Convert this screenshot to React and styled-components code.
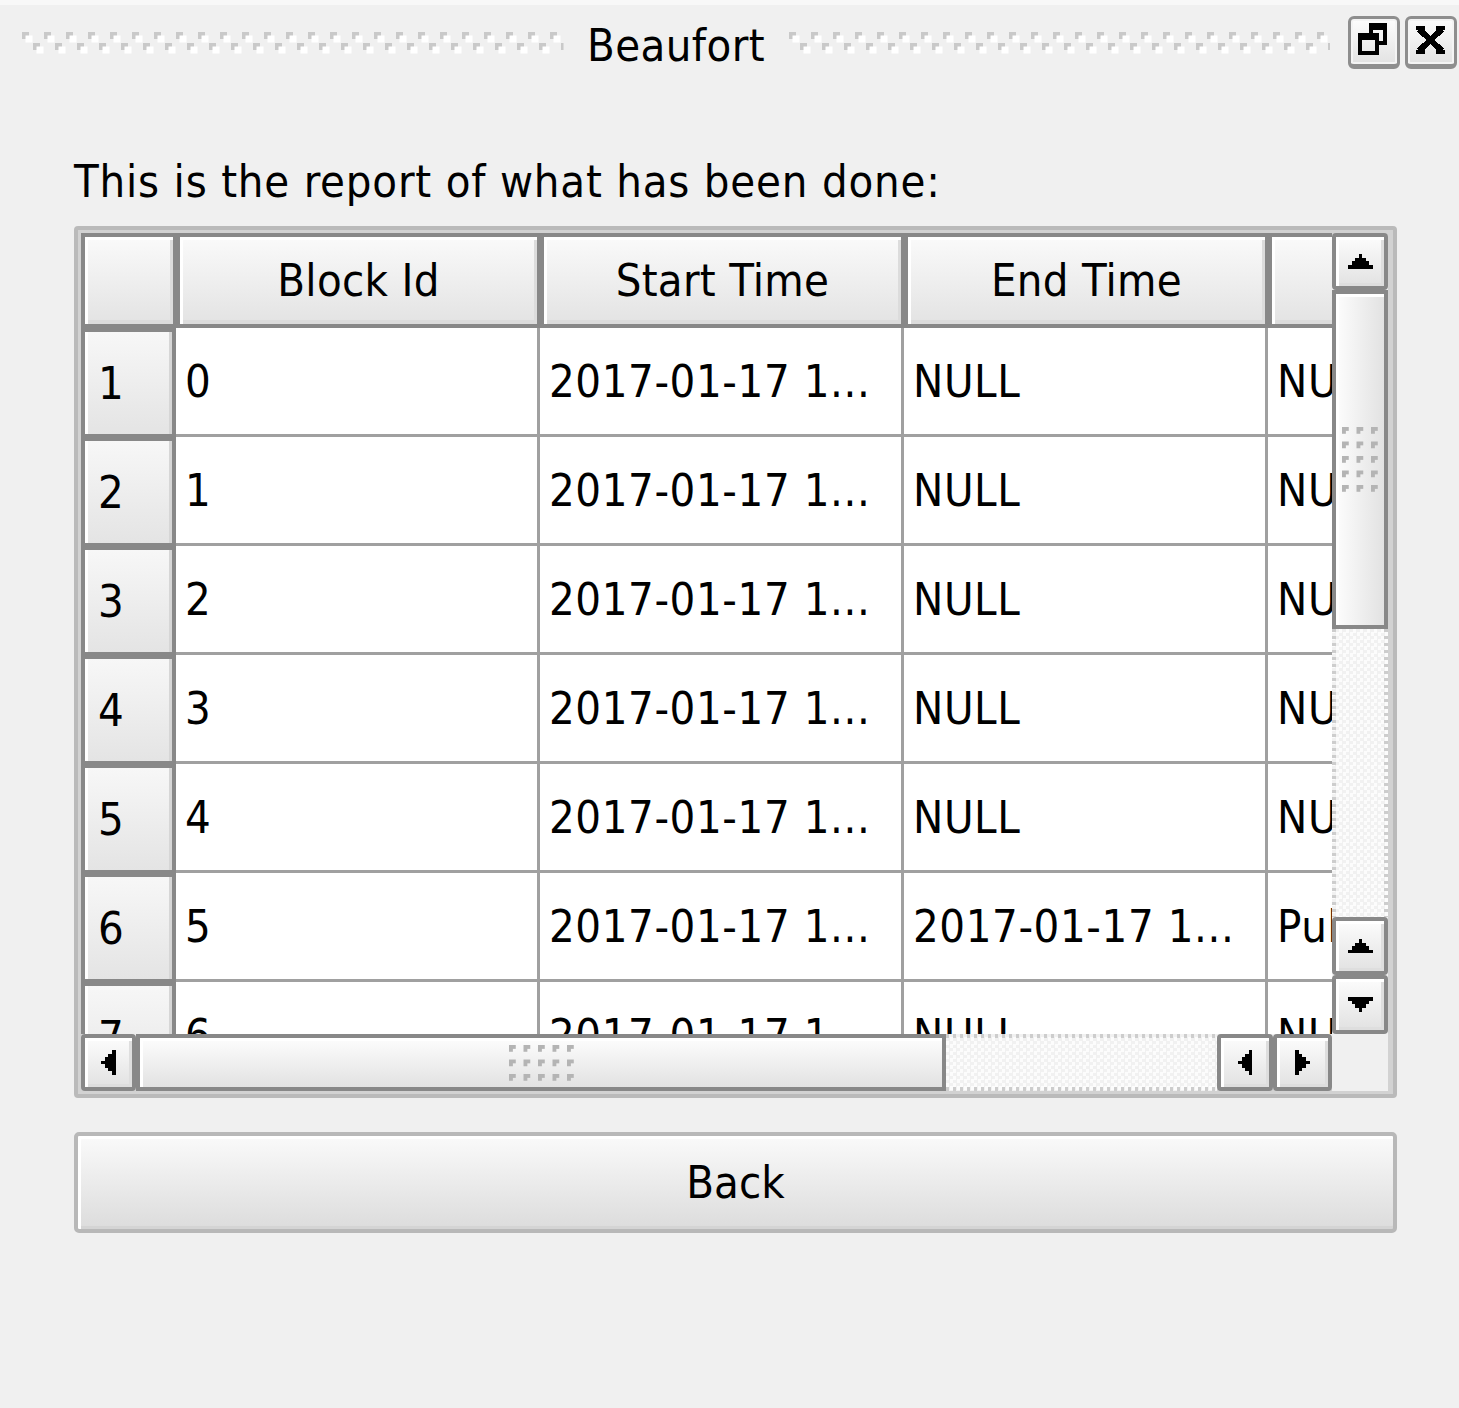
import React from 'react';
import styled, { createGlobalStyle } from 'styled-components';

const FONT = `"DejaVu Sans Condensed", "DejaVu Sans", "Liberation Sans", sans-serif`;

const Global = createGlobalStyle`
  html, body { margin: 0; padding: 0; background: #f0f0f0; }
`;

const Window = styled.div`
  width: 1459px;
  height: 1408px;
  box-sizing: border-box;
  background: #f0f0f0;
  border-top: 5px solid #f8f8f8;
  font-family: ${FONT};
  font-stretch: semi-condensed;
  font-size: 45px;
  color: #000;
  overflow: hidden;
  display: flex;
  flex-direction: column;
`;

const TitleBar = styled.div`
  display: flex;
  align-items: center;
  height: 53px;
  padding: 11px 2px 0 22px;
`;

const GripWrap = styled.div`
  flex: 1;
  height: 22px;
`;

const GripSvg = styled.svg`
  display: block;
  width: 100%;
  height: 22px;
`;

function TitleGrip({ id }) {
  return (
    <GripWrap>
      <GripSvg>
        <defs>
          <pattern id={id} width="22" height="22" patternUnits="userSpaceOnUse">
            <rect x="0" y="0" width="7" height="7" fill="#c9c9c9" />
            <rect x="3.5" y="3.5" width="7" height="7" fill="#ffffff" />
            <rect x="11" y="11" width="7" height="7" fill="#c9c9c9" />
            <rect x="14.5" y="14.5" width="7" height="7" fill="#ffffff" />
          </pattern>
        </defs>
        <rect x="0" y="0" width="100%" height="22" fill={`url(#${id})`} />
      </GripSvg>
    </GripWrap>
  );
}

const Title = styled.div`
  width: 225px;
  text-align: center;
  padding-top: 6px;
  line-height: 1;
  letter-spacing: 0.4px;
`;

const TitleButtons = styled.div`
  display: flex;
  gap: 5px;
  margin-left: 18px;
`;

const TitleButton = styled.div`
  width: 52px;
  height: 53px;
  box-sizing: border-box;
  border: 3px solid #8e8e8e;
  border-bottom-width: 5px;
  border-radius: 6px;
  background: linear-gradient(#fdfdfd, #e2e2e2);
  box-shadow: inset 0 0 0 2px #f4f4f4;
  display: flex;
  align-items: center;
  justify-content: center;
`;

const IconSvg = styled.svg`
  display: block;
  shape-rendering: crispEdges;
`;

function RestoreIcon() {
  return (
    <IconSvg width="46" height="45" viewBox="3 3 46 45">
      <rect x="21" y="7" width="18" height="7" fill="#000" />
      <rect x="35.4" y="7" width="3.6" height="22" fill="#000" />
      <rect x="31" y="25.4" width="8" height="3.6" fill="#000" />
      <rect x="21" y="7" width="3.6" height="10" fill="#000" />
      <rect x="10" y="17" width="21" height="7" fill="#000" />
      <rect x="10" y="17" width="3.6" height="22" fill="#000" />
      <rect x="27.4" y="17" width="3.6" height="22" fill="#000" />
      <rect x="10" y="35.4" width="21" height="3.6" fill="#000" />
    </IconSvg>
  );
}

function CloseIcon() {
  return (
    <IconSvg width="46" height="45" viewBox="3 3 46 45">
      <path d="M14 13 L37 35 M37 13 L14 35" stroke="#000" strokeWidth="6" fill="none" />
      <rect x="11" y="10" width="9" height="3.6" fill="#000" />
      <rect x="31" y="10" width="9" height="3.6" fill="#000" />
      <rect x="11" y="34" width="9" height="3.6" fill="#000" />
      <rect x="31" y="34" width="9" height="3.6" fill="#000" />
    </IconSvg>
  );
}

const Body = styled.div`
  display: flex;
  flex-direction: column;
  padding: 0 62px 0 74px;
`;

const Label = styled.div`
  margin-top: 86px;
  line-height: 54px;
  white-space: nowrap;
  letter-spacing: 0.8px;
`;

const Frame = styled.div`
  margin-top: 17px;
  box-sizing: border-box;
  height: 872px;
  border: 4px solid #bababa;
  border-radius: 4px;
  padding: 3px 5px 3px 3px;
  box-shadow: inset 0 0 0 5px #d2d2d2;
  display: grid;
  grid-template-columns: 1251px 56px;
  grid-template-rows: 801px 57px;
  background: #f0f0f0;
`;

const Viewport = styled.div`
  overflow: hidden;
  background: #fff;
`;

const Table = styled.div`
  display: grid;
  grid-template-columns: 95px repeat(4, 364px);
  grid-template-rows: 95px;
  grid-auto-rows: 109px;
  width: max-content;
`;

const HeaderCell = styled.div`
  box-sizing: border-box;
  border: 4px solid #888;
  border-right-width: 3px;
  background: linear-gradient(#fafafa, #e3e3e3);
  box-shadow: inset 3px 3px 0 #ffffff, inset -3px -4px 0 #dcdcdc;
  display: flex;
  align-items: center;
  justify-content: center;
  white-space: nowrap;
  overflow: hidden;
  letter-spacing: 0.3px;
`;

const RowHeader = styled.div`
  box-sizing: border-box;
  border: 4px solid #888;
  border-bottom-width: 3px;
  background: linear-gradient(#f7f7f7, #e4e4e4);
  box-shadow: inset 3px 0 0 #ffffff, inset -3px 0 0 #d6d6d6;
  display: flex;
  align-items: center;
  padding-left: 13px;
  white-space: nowrap;
`;

const Cell = styled.div`
  box-sizing: border-box;
  border-right: 3px solid #a0a0a0;
  border-bottom: 3px solid #a0a0a0;
  background: #fff;
  display: flex;
  align-items: center;
  padding-left: 9px;
  white-space: nowrap;
  overflow: hidden;
  letter-spacing: 0.6px;
`;

const VScroll = styled.div`
  display: flex;
  flex-direction: column;
`;

const HScroll = styled.div`
  display: flex;
  flex-direction: row;
`;

const Corner = styled.div`
  background: #f0f0f0;
`;

const ScrollButton = styled.div`
  box-sizing: border-box;
  flex: 0 0 ${p => p.$size}px;
  border: 4px solid #888;
  border-radius: 4px;
  background: linear-gradient(#fcfcfc, #e2e2e2);
  box-shadow: inset 3px 3px 0 #ffffff, inset -3px -3px 0 #dedede;
  display: flex;
  align-items: center;
  justify-content: center;
`;

const Slider = styled.div`
  box-sizing: border-box;
  flex: 0 0 ${p => p.$size}px;
  border: 4px solid #888;
  background: ${p => (p.$vertical ? 'linear-gradient(90deg, #fdfdfd, #e2e2e2)' : 'linear-gradient(#fdfdfd, #e2e2e2)')};
  box-shadow: inset 3px 3px 0 #ffffff;
  display: flex;
  align-items: center;
  justify-content: center;
`;

const Track = styled.div`
  box-sizing: border-box;
  flex: 0 0 ${p => p.$size}px;
  background-color: #fcfcfc;
  background-image: ${p =>
    p.$vertical
      ? 'linear-gradient(#cdcdcd 50%, transparent 50%), linear-gradient(#cdcdcd 50%, transparent 50%), repeating-conic-gradient(#f1f1f1 0 25%, #fcfcfc 0 50%)'
      : 'linear-gradient(90deg, #cdcdcd 50%, transparent 50%), linear-gradient(90deg, #cdcdcd 50%, transparent 50%), repeating-conic-gradient(#f1f1f1 0 25%, #fcfcfc 0 50%)'};
  background-size: ${p => (p.$vertical ? '4px 7px, 4px 7px, 7px 7px' : '7px 4px, 7px 4px, 7px 7px')};
  background-position: ${p => (p.$vertical ? 'left top, right top, 0 0' : 'left top, left bottom, 0 0')};
  background-repeat: ${p => (p.$vertical ? 'repeat-y, repeat-y, repeat' : 'repeat-x, repeat-x, repeat')};
`;

const ArrowSvg = styled.svg`
  display: block;
  shape-rendering: crispEdges;
`;

const UP = '3,0 4,0 4,1 5,1 5,2 6,2 6,3 7,3 7,4 0,4 0,3 1,3 1,2 2,2 2,1 3,1';
const DOWN = '0,0 7,0 7,1 6,1 6,2 5,2 5,3 4,3 4,4 3,4 3,3 2,3 2,2 1,2 1,1 0,1';
const LEFT = '0,3 0,4 1,4 1,5 2,5 2,6 3,6 3,7 4,7 4,0 3,0 3,1 2,1 2,2 1,2 1,3';
const RIGHT = '4,3 4,4 3,4 3,5 2,5 2,6 1,6 1,7 0,7 0,0 1,0 1,1 2,1 2,2 3,2 3,3';

function Arrow({ dir }) {
  const vertical = dir === 'up' || dir === 'down';
  const pts = { up: UP, down: DOWN, left: LEFT, right: RIGHT }[dir];
  return (
    <ArrowSvg
      width={vertical ? 25 : 14.5}
      height={vertical ? 14.5 : 25}
      viewBox={vertical ? '0 0 7 4' : '0 0 4 7'}
      preserveAspectRatio="none"
    >
      <polygon points={pts} fill="#000" />
    </ArrowSvg>
  );
}

function SliderGrip({ id, cols, rows }) {
  const w = (cols - 1) * 14.5 + 7;
  const h = (rows - 1) * 14.5 + 7;
  return (
    <IconSvg width={w} height={h}>
      <defs>
        <pattern id={id} width="14.5" height="14.5" patternUnits="userSpaceOnUse">
          <rect x="0" y="0" width="7" height="3.5" fill="#b4b4b4" />
          <rect x="0" y="0" width="3.5" height="7" fill="#b4b4b4" />
        </pattern>
      </defs>
      <rect x="0" y="0" width={w} height={h} fill={`url(#${id})`} />
    </IconSvg>
  );
}

const BackButton = styled.button`
  margin-top: 34px;
  width: 100%;
  height: 101px;
  box-sizing: border-box;
  border: 4px solid #b8b8b8;
  border-radius: 5px;
  background: linear-gradient(#fafafa, #dcdcdc);
  box-shadow: inset 3px 3px 0 #ffffff, inset 0 -3px 0 #d4d4d4;
  font-family: ${FONT};
  font-stretch: semi-condensed;
  font-size: 45px;
  color: #000;
  padding: 0;
  cursor: default;
`;

const headers = ['', 'Block Id', 'Start Time', 'End Time', 'Description'];
const T = '2017-01-17 1...';
const rows = [
  ['1', '0', T, 'NULL', 'NULL'],
  ['2', '1', T, 'NULL', 'NULL'],
  ['3', '2', T, 'NULL', 'NULL'],
  ['4', '3', T, 'NULL', 'NULL'],
  ['5', '4', T, 'NULL', 'NULL'],
  ['6', '5', T, T, 'Publish...'],
  ['7', '6', T, 'NULL', 'NULL'],
  ['8', '7', T, 'NULL', 'NULL'],
];

export default function App() {
  return (
    <Window>
      <Global />
      <TitleBar>
        <TitleGrip id="gripL" />
        <Title>Beaufort</Title>
        <TitleGrip id="gripR" />
        <TitleButtons>
          <TitleButton><RestoreIcon /></TitleButton>
          <TitleButton><CloseIcon /></TitleButton>
        </TitleButtons>
      </TitleBar>
      <Body>
        <Label>This is the report of what has been done:</Label>
        <Frame>
          <Viewport>
            <Table>
              {headers.map((h, i) => (
                <HeaderCell key={'h' + i}>{h}</HeaderCell>
              ))}
              {rows.map(r => (
                <React.Fragment key={r[0]}>
                  <RowHeader>{r[0]}</RowHeader>
                  {r.slice(1).map((c, j) => (
                    <Cell key={j}>{c}</Cell>
                  ))}
                </React.Fragment>
              ))}
            </Table>
          </Viewport>
          <VScroll>
            <ScrollButton $size={57}><Arrow dir="up" /></ScrollButton>
            <Slider $size={339} $vertical>
              <SliderGrip id="vgrip" cols={3} rows={5} />
            </Slider>
            <Track $size={288} $vertical />
            <ScrollButton $size={58}><Arrow dir="up" /></ScrollButton>
            <ScrollButton $size={59}><Arrow dir="down" /></ScrollButton>
          </VScroll>
          <HScroll>
            <ScrollButton $size={55}><Arrow dir="left" /></ScrollButton>
            <Slider $size={810}>
              <SliderGrip id="hgrip" cols={5} rows={3} />
            </Slider>
            <Track $size={271} />
            <ScrollButton $size={56}><Arrow dir="left" /></ScrollButton>
            <ScrollButton $size={59}><Arrow dir="right" /></ScrollButton>
          </HScroll>
          <Corner />
        </Frame>
        <BackButton>Back</BackButton>
      </Body>
    </Window>
  );
}
